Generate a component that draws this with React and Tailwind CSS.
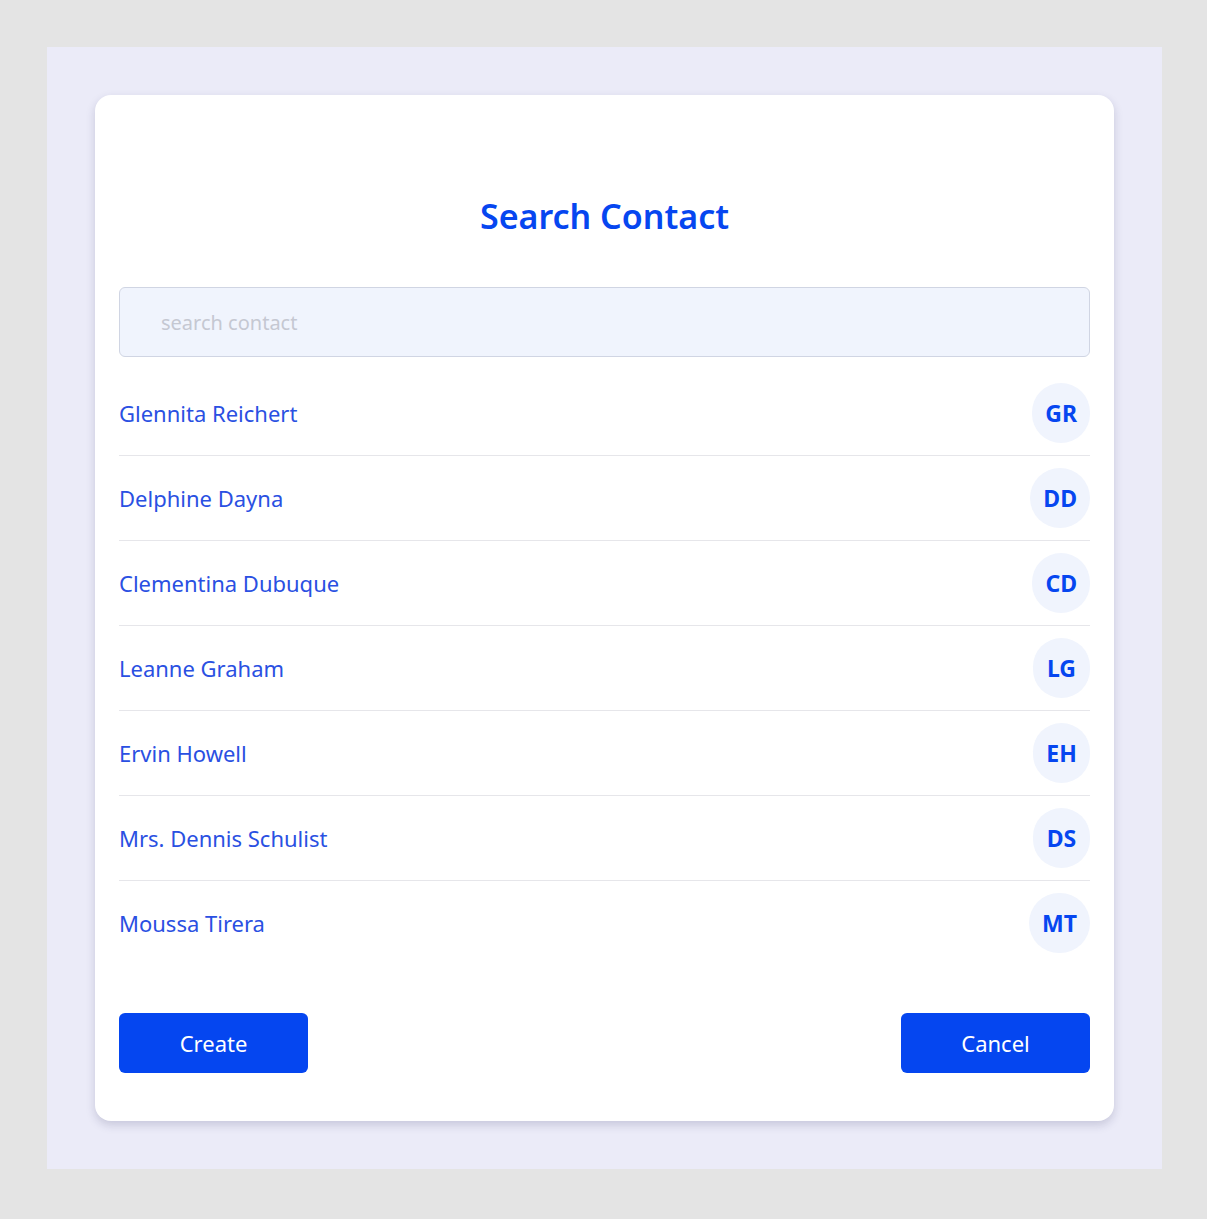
const contacts = [
  'Glennita Reichert',
  'Delphine Dayna',
  'Clementina Dubuque',
  'Leanne Graham',
  'Ervin Howell',
  'Mrs. Dennis Schulist',
  'Moussa Tirera',
];

function initials(name) {
  const parts = name.replace('Mrs. ', '').split(' ');
  return parts.map((p) => p[0]).join('').toUpperCase();
}

export default function App() {
  return (
    <div className="min-h-[1219px] bg-[#e4e4e4] p-[47px] font-['Noto_Sans',sans-serif]">
      <div className="w-[1115px] bg-[#ebebf8] p-12">
        <div className="rounded-2xl bg-white px-6 pt-[98px] pb-12 shadow-[0_4px_10px_rgba(40,40,90,0.18)]">
          <h1 className="text-center text-[34px] font-semibold leading-[46px] text-[#0646f0]">
            Search Contact
          </h1>
          <input
            type="text"
            placeholder="search contact"
            className="mt-[48px] block h-[70px] w-full rounded-md border border-[#d0d5e3] bg-[#f0f4fd] px-[41px] text-[20px] text-[#333] placeholder:text-[#c5c8d2] outline-none"
          />
          <ul className="mt-[14px]">
            {contacts.map((name, i) => (
              <li
                key={name}
                className={
                  'flex items-center justify-between py-3 ' +
                  (i < contacts.length - 1 ? 'border-b border-[#e6e6ea]' : '')
                }
              >
                <span className="text-[22px] text-[#2a50e2]">{name}</span>
                <span className="flex h-[60px] min-w-[57px] items-center justify-center rounded-full bg-[#f0f4fd] px-[13px] text-[23px] font-bold text-[#0646f0]">
                  {initials(name)}
                </span>
              </li>
            ))}
          </ul>
          <div className="mt-12 flex justify-between">
            <button className="h-[60px] w-[189px] rounded-md bg-[#0546f0] text-[22px] text-white">
              Create
            </button>
            <button className="h-[60px] w-[189px] rounded-md bg-[#0546f0] text-[22px] text-white">
              Cancel
            </button>
          </div>
        </div>
      </div>
    </div>
  );
}
